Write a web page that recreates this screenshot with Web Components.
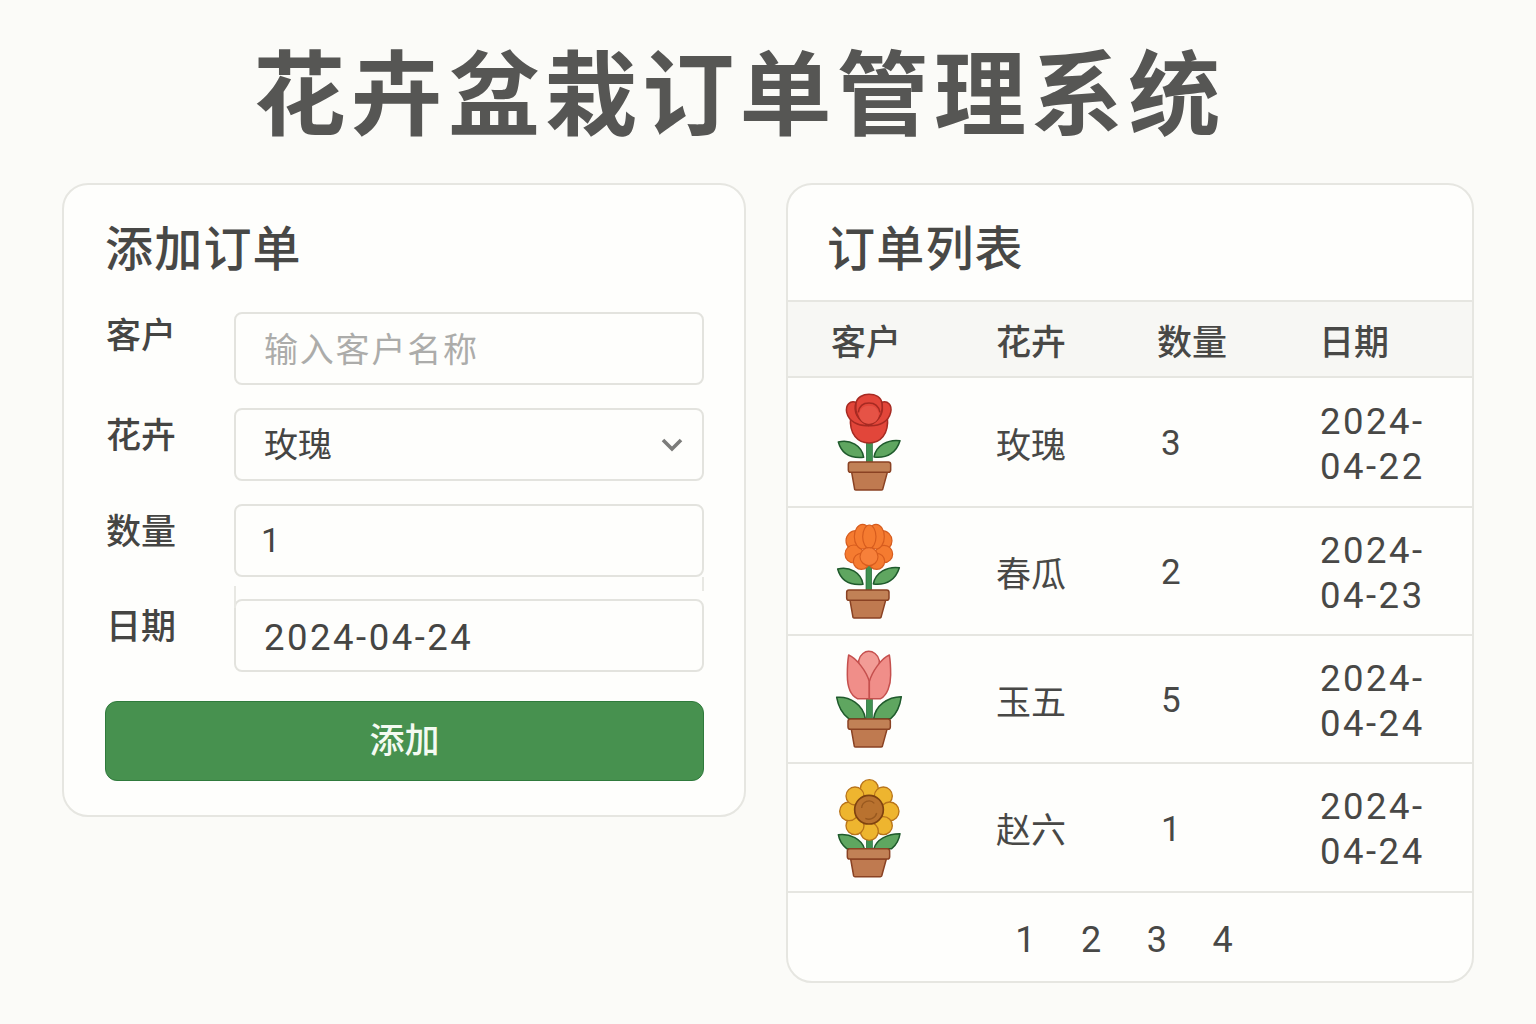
<!DOCTYPE html>
<html lang="zh">
<head>
<meta charset="utf-8">
<title>花卉盆栽订单管理系统</title>
<style>
    html, body { margin: 0; height: 1024px; overflow: hidden; }
    body {
        background: #fbfbf8;
        color: #454543;
        font-family: Roboto, "Noto Sans CJK SC", sans-serif;
    }
</style>
</head>
<body>
<order-app>
    <panel-card slot="left" heading="添加订单">
        <order-form></order-form>
    </panel-card>
    <panel-card slot="right" heading="订单列表" flush>
        <order-table></order-table>
    </panel-card>
</order-app>

<script>
class OrderApp extends HTMLElement {
    constructor() {
        super();
        this.attachShadow({ mode: "open" }).innerHTML = `
            <style>
                :host { display: block; padding: 0 62px; }
                h1 {
                    margin: 0;
                    height: 183px;
                    padding: 0 57px 0 0;
                    box-sizing: border-box;
                    text-align: center;
                    font-size: 92px;
                    letter-spacing: 5.2px;
                    line-height: 194px;
                    font-weight: 700;
                    color: #565654;
                }
                .columns {
                    display: grid;
                    grid-template-columns: 684px 688px;
                    gap: 40px;
                    align-items: start;
                }
            </style>
            <h1>花卉盆栽订单管理系统</h1>
            <div class="columns">
                <slot name="left"></slot>
                <slot name="right"></slot>
            </div>
        `;
    }
}

class PanelCard extends HTMLElement {
    constructor() {
        super();
        this.attachShadow({ mode: "open" });
    }

    connectedCallback() {
        this.shadowRoot.innerHTML = `
            <style>
                :host {
                    display: block;
                    box-sizing: border-box;
                    background: #fefefc;
                    border: 2px solid #e6e6e1;
                    border-radius: 26px;
                    overflow: hidden;
                }
                h2 {
                    margin: 0;
                    padding: 31px 0 0 41px;
                    height: 85px;
                    font-size: 48px;
                    letter-spacing: 1.2px;
                    line-height: 68px;
                    font-weight: 500;
                    color: #484846;
                }
                :host([flush]) h2 { height: 84px; padding-left: 39px; }
            </style>
            <h2>${this.getAttribute("heading")}</h2>
            <slot></slot>
        `;
    }
}

class FormField extends HTMLElement {
    constructor() {
        super();
        this.attachShadow({ mode: "open" });
    }

    connectedCallback() {
        this.shadowRoot.innerHTML = `
            <style>
                :host {
                    display: grid;
                    grid-template-columns: 129px 470px;
                    font-size: 34px;
                }
                label {
                    line-height: 46px;
                    padding-left: 1px;
                    margin-top: var(--label-top, 0);
                    font-size: 35px;
                    color: #454543;
                    font-weight: 500;
                }
                .box {
                    position: relative;
                    box-sizing: border-box;
                    height: 73px;
                    border: 2px solid #e3e3de;
                    border-radius: 8px;
                    padding-left: 28px;
                    line-height: 69px;
                    display: flex;
                    align-items: center;
                    justify-content: space-between;
                }
                svg { margin-right: 18px; }
                :host([seam]) .box::before,
                :host([seam]) .box::after {
                    content: "";
                    position: absolute;
                    top: -15px;
                    width: 2px;
                    height: 22px;
                    background: #e8e8e3;
                }
                :host([seam]) .box::before { left: -2px; }
                :host([seam]) .box::after { right: -2px; top: -24px; height: 14px; }
            </style>
            <label>${this.getAttribute("label")}</label>
            <div class="box"><slot></slot>${this.hasAttribute("select") ? `
                <svg width="24" height="16" viewBox="0 0 24 16"><path d="M3 3l9 9 9-9" fill="none" stroke="#7c7c7a" stroke-width="3.6"/></svg>` : ""}</div>
        `;
    }
}

class OrderForm extends HTMLElement {
    constructor() {
        super();
        this.attachShadow({ mode: "open" }).innerHTML = `
            <style>
                :host { display: block; padding: 11px 40px 34px 41px; }
                form-field { margin-bottom: 23px; }
                .hint { color: #acacaa; letter-spacing: 1.8px; margin-top: 4px; }
                .value { color: #454543; margin-top: 2px; }
                .qty { margin: 0 0 0 -3px; }
                .date { font-size: 36.5px; letter-spacing: 2.5px; margin-top: 4px; }
                button {
                    display: block;
                    width: 599px;
                    height: 80px;
                    margin-top: 29px;
                    border: 1px solid #2f7a3c;
                    border-radius: 12px;
                    background: #47914f;
                    color: #f4faf2;
                    font: 500 35px "Noto Sans CJK SC", sans-serif;
                    padding: 0 0 8px;
                }
            </style>
            <form-field label="客户" style="--label-top:2px"><span class="hint">输入客户名称</span></form-field>
            <form-field label="花卉" select style="--label-top:6px"><span class="value">玫瑰</span></form-field>
            <form-field label="数量" style="--label-top:6px;margin-bottom:22px"><span class="value qty">1</span></form-field>
            <form-field label="日期" seam style="--label-top:6px;margin-bottom:0"><span class="value date">2024-04-24</span></form-field>
            <button type="button">添加</button>
        `;
    }
}

const POT = `
    <g stroke="#8a4223" stroke-width="4.5" stroke-linejoin="round" fill="#bf7a50">
        <path d="M155 278H262L248 329Q247 331 244 331H168Q165 331 164 329Z"/>
        <rect x="145" y="247" width="127" height="31" rx="7" fill="#c18156"/>
    </g>`;

const LEAVES = `
    <g fill="#5fa660" stroke="#1f5a2c" stroke-width="4.5" stroke-linejoin="round">
        <path d="M115 187C150 178 186 198 191 233C150 237 124 220 115 187Z"/>
        <path d="M300 183C264 178 228 198 222 232C264 237 290 216 300 183Z"/>
    </g>`;

const FLOWERS = {
    rose: {
        box: "0 7 420 360",
        art: `
            <rect x="199" y="180" width="18" height="68" fill="#3f9150" stroke="#25683a" stroke-width="2"/>
            ${LEAVES}
            ${POT}
            <g fill="#e2463a" stroke="#a62a22" stroke-width="4.5" stroke-linejoin="round">
                <path d="M152 110C146 165 175 190 207 190C240 190 268 165 262 110Z"/>
                <path d="M168 68C150 62 136 75 140 98C146 125 175 140 206 138C170 120 160 95 168 68Z"/>
                <path d="M245 68C263 62 277 75 272 98C266 125 240 140 206 138C243 120 252 95 245 68Z"/>
                <path d="M168 72C170 52 190 44 207 44C226 44 244 52 246 72C250 105 230 132 206 134C182 132 164 105 168 72Z"/>
                <path d="M178 105C178 88 190 78 207 78C224 78 236 88 236 105C236 120 224 132 206 132C190 132 178 120 178 105Z" fill="#e65346" stroke="none"/>
                <path d="M175 98C178 75 194 70 207 70C222 70 236 78 240 98" fill="none"/>
            </g>`
    },
    mum: {
        box: "0 393 420 360",
        art: `
            <rect x="198" y="556" width="17" height="76" fill="#3f9150" stroke="#25683a" stroke-width="2"/>
            <g transform="translate(-2 380)">${LEAVES}</g>
            <g transform="translate(-5 383)">${POT}</g>
            <g fill="#f57b30" stroke="#d65c1e" stroke-width="3.5">
                <circle cx="168" cy="482" r="30"/>
                <circle cx="246" cy="482" r="30"/>
                <circle cx="162" cy="522" r="27"/>
                <circle cx="252" cy="522" r="26"/>
                <circle cx="184" cy="544" r="24"/>
                <circle cx="230" cy="544" r="24"/>
                <ellipse cx="188" cy="470" rx="25" ry="37"/>
                <ellipse cx="228" cy="470" rx="25" ry="37"/>
                <ellipse cx="208" cy="470" rx="20" ry="35"/>
                <circle cx="207" cy="530" r="27" fill="#f7803a"/>
            </g>`
    },
    tulip: {
        box: "0 -3 420 360",
        art: `
            <rect x="199" y="170" width="18" height="68" fill="#3f9150" stroke="#25683a" stroke-width="2"/>
            <g fill="#5fa660" stroke="#1f5a2c" stroke-width="4.5" stroke-linejoin="round">
                <path d="M110 172C150 168 190 195 196 236H146C125 220 115 200 110 172Z"/>
                <path d="M304 170C262 170 226 198 221 236H272C292 220 300 198 304 170Z"/>
            </g>
            <g transform="translate(-1 -10)">${POT}</g>
            <g fill="#f08e89" stroke="#c5504e" stroke-width="4.5" stroke-linejoin="round">
                <path d="M176 62C180 42 196 34 206 34C218 34 234 42 238 62C240 100 225 130 207 150C190 130 174 100 176 62Z" fill="#f29c96"/>
                <path d="M146 45C170 55 200 95 208 125V176H172C150 165 142 135 142 105C142 85 143 62 146 45Z"/>
                <path d="M268 45C244 55 216 95 208 125V176H242C262 165 272 135 272 105C272 85 271 62 268 45Z"/>
            </g>`
    },
    sunflower: {
        box: "0 380 420 360",
        art: `
            <rect x="199" y="590" width="18" height="36" fill="#3f9150" stroke="#25683a" stroke-width="2"/>
            <g fill="#5fa660" stroke="#1f5a2c" stroke-width="4.5" stroke-linejoin="round">
                <path d="M115 580C150 575 186 595 193 622H140C125 610 118 598 115 580Z"/>
                <path d="M300 577C262 577 228 595 222 622H275C290 610 297 597 300 577Z"/>
            </g>
            <g transform="translate(-3 375)">${POT}</g>
            <g fill="#eeb52f" stroke="#b8741a" stroke-width="4">
                <circle cx="208" cy="442" r="27"/>
                <circle cx="250" cy="464" r="27"/>
                <circle cx="269" cy="510" r="28"/>
                <circle cx="250" cy="553" r="27"/>
                <circle cx="208" cy="570" r="27"/>
                <circle cx="165" cy="553" r="27"/>
                <circle cx="147" cy="510" r="28"/>
                <circle cx="165" cy="464" r="27"/>
            </g>
            <circle cx="207" cy="505" r="43" fill="#b9722f" stroke="#7f4310" stroke-width="5"/>
            <path d="M185 500a22 22 0 0 1 38-14M230 515a24 24 0 0 1-34 16" fill="none" stroke="#99591f" stroke-width="4"/>`
    }
};

class FlowerPot extends HTMLElement {
    constructor() {
        super();
        this.attachShadow({ mode: "open" });
    }

    connectedCallback() {
        const flower = FLOWERS[this.getAttribute("kind")];
        this.shadowRoot.innerHTML = `
            <style>
                :host { display: block; width: 140px; height: 120px; }
                svg { display: block; }
            </style>
            <svg width="140" height="120" viewBox="${flower.box}">${flower.art}</svg>
        `;
    }
}

class OrderRow extends HTMLElement {
    constructor() {
        super();
        this.attachShadow({ mode: "open" });
    }

    connectedCallback() {
        const a = (name) => this.getAttribute(name);
        this.shadowRoot.innerHTML = `
            <style>
                :host {
                    display: grid;
                    grid-template-columns: 208px 161px 163px 1fr;
                    align-items: center;
                    box-sizing: border-box;
                    border-bottom: 2px solid #e6e6e1;
                    font-size: 35px;
                    font-weight: 400;
                    color: #484846;
                }
                flower-pot { margin-left: 12px; }
                .qty { padding-left: 4px; margin-top: 3px; }
                .date { width: 130px; margin-top: 3px; line-height: 45px; font-size: 36.5px; letter-spacing: 2.5px; }
            </style>
            <flower-pot kind="${a("kind")}"></flower-pot>
            <div>${a("flower")}</div>
            <div class="qty">${a("qty")}</div>
            <div class="date">${a("date")}</div>
        `;
    }
}

class OrderTable extends HTMLElement {
    constructor() {
        super();
        this.attachShadow({ mode: "open" }).innerHTML = `
            <style>
                :host { display: block; }
                .head {
                    display: grid;
                    grid-template-columns: 208px 161px 162px 1fr;
                    align-items: center;
                    box-sizing: border-box;
                    height: 78px;
                    border-top: 2px solid #e6e6e1;
                    border-bottom: 2px solid #e6e6e1;
                    background: #f7f7f4;
                    font-size: 35px;
                    font-weight: 500;
                    color: #484846;
                }
                .head span:first-child { padding-left: 43px; }
                .pages {
                    display: flex;
                    justify-content: center;
                    gap: 45.5px;
                    height: 82px;
                    padding: 6px 12px 0 0;
                    align-items: center;
                    font-size: 36px;
                    color: #484846;
                }
            </style>
            <div class="head"><span>客户</span><span>花卉</span><span>数量</span><span>日期</span></div>
            <order-row style="height:130px" kind="rose" flower="玫瑰" qty="3" date="2024-04-22"></order-row>
            <order-row style="height:128px" kind="mum" flower="春瓜" qty="2" date="2024-04-23"></order-row>
            <order-row style="height:128px" kind="tulip" flower="玉五" qty="5" date="2024-04-24"></order-row>
            <order-row style="height:129px" kind="sunflower" flower="赵六" qty="1" date="2024-04-24"></order-row>
            <div class="pages"><span>1</span><span>2</span><span>3</span><span>4</span></div>
        `;
    }
}

customElements.define("order-app", OrderApp);
customElements.define("panel-card", PanelCard);
customElements.define("form-field", FormField);
customElements.define("order-form", OrderForm);
customElements.define("flower-pot", FlowerPot);
customElements.define("order-row", OrderRow);
customElements.define("order-table", OrderTable);
</script>
</body>
</html>
